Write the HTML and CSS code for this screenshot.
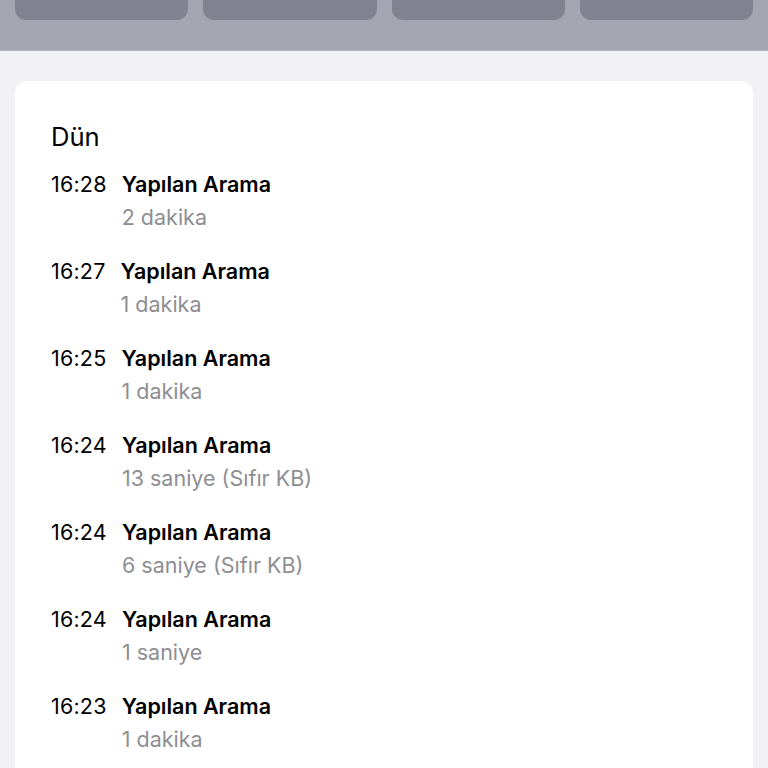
FILE: index.html
```html
<!DOCTYPE html>
<html lang="tr">
<head>
<meta charset="utf-8">
<link rel="stylesheet" href="styles.css">
</head>
<body>
<div class="topbar">
  <div class="btn"></div>
  <div class="btn"></div>
  <div class="btn"></div>
  <div class="btn"></div>
</div>
<main class="page">
  <section class="card">
    <h2 class="day">Dün</h2>
    <div class="row"><span class="time">16:28</span><div class="info"><div class="title">Yapılan Arama</div><div class="sub">2 dakika</div></div></div>
    <div class="row"><span class="time">16:27</span><div class="info"><div class="title">Yapılan Arama</div><div class="sub">1 dakika</div></div></div>
    <div class="row"><span class="time">16:25</span><div class="info"><div class="title">Yapılan Arama</div><div class="sub">1 dakika</div></div></div>
    <div class="row"><span class="time">16:24</span><div class="info"><div class="title">Yapılan Arama</div><div class="sub">13 saniye (Sıfır KB)</div></div></div>
    <div class="row"><span class="time">16:24</span><div class="info"><div class="title">Yapılan Arama</div><div class="sub">6 saniye (Sıfır KB)</div></div></div>
    <div class="row"><span class="time">16:24</span><div class="info"><div class="title">Yapılan Arama</div><div class="sub">1 saniye</div></div></div>
    <div class="row"><span class="time">16:23</span><div class="info"><div class="title">Yapılan Arama</div><div class="sub">1 dakika</div></div></div>
  </section>
</main>
</body>
</html>
```
FILE: styles.css
```css
* { box-sizing: border-box; }
html, body { margin: 0; padding: 0; }
body {
  width: 768px;
  height: 768px;
  overflow: hidden;
  background: #f2f2f6;
  font-family: Inter, "Noto Sans", sans-serif;
  color: #000;
}
.topbar {
  height: 51px;
  background: #a3a5b1;
  border-bottom: 1px solid #b7b8c2;
  display: flex;
  gap: 15px;
  padding: 0 15px;
  align-items: flex-start;
}
.btn {
  flex: 1;
  height: 20px;
  background: #80828f;
  border-radius: 0 0 11px 11px;
}
.page { padding: 30px 15px 0; }
.card {
  background: #fff;
  border-radius: 12px;
  padding: 36px 36px 0;
  height: 700px;
  overflow: hidden;
}
.day {
  margin: 0 0 12px;
  font-size: 25.6px;
  font-weight: 400;
  line-height: 40px;
}
.row {
  display: flex;
  gap: 15px;
  height: 87px;
  flex-shrink: 0;
}
.time {
  font-size: 21.5px;
  line-height: 30px;
  letter-spacing: 0.2px;
}
.title {
  font-size: 21.5px;
  font-weight: 600;
  line-height: 30px;
}
.sub {
  font-size: 21.5px;
  line-height: 30px;
  margin-top: 3px;
  color: #8e8e93;
}
```
